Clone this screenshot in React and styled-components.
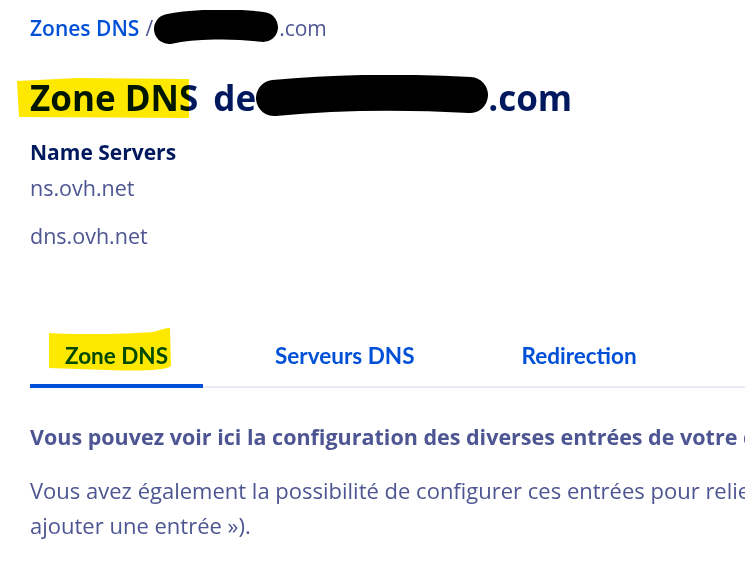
import React from "react";
import styled, { createGlobalStyle } from "styled-components";

const GlobalStyle = createGlobalStyle`
  body {
    margin: 0;
    background: #ffffff;
  }
`;

const Page = styled.div`
  width: 745px;
  height: 565px;
  overflow: hidden;
  box-sizing: border-box;
  padding: 10px 0 0 30px;
  font-family: "Open Sans", sans-serif;
`;

const Breadcrumb = styled.div`
  display: flex;
  align-items: center;
  height: 36px;
  font-size: 21px;
  color: #4d5592;
`;

const Crumb = styled.span`
  color: #0050d7;
  font-weight: 600;
`;

const Sep = styled.span`
  margin-left: 6px;
`;

const Title = styled.h1`
  position: relative;
  display: flex;
  align-items: center;
  margin: 29px 0 0;
  height: 44px;
  font-size: 35px;
  font-weight: 700;
  color: #00185e;
`;

const TitleWord = styled.span`
  white-space: pre;
  margin-left: ${(p) => p.$gap || 0}px;
`;

const Scribble = styled.svg`
  display: block;
  flex: none;
`;

const Marker = styled.svg`
  position: absolute;
  left: ${(p) => p.$left}px;
  top: ${(p) => p.$top}px;
  mix-blend-mode: multiply;
  pointer-events: none;
`;

const SectionTitle = styled.h2`
  margin: 19px 0 0;
  font-size: 21px;
  line-height: 28px;
  font-weight: 700;
  color: #00185e;
`;

const Server = styled.div`
  margin-top: ${(p) => p.$gap}px;
  font-size: 21.5px;
  line-height: 28px;
  color: #4d5592;
`;

const Tabs = styled.div`
  display: flex;
  gap: 37px;
  margin-top: 76px;
  border-bottom: 2px solid #e6ebf5;
`;

const Tab = styled.div`
  position: relative;
  padding: 14px 35px 12px;
  margin-bottom: -2px;
  font-family: Lato, sans-serif;
  font-size: 22.5px;
  line-height: 32px;
  font-weight: 700;
  color: #0050d7;
  border-bottom: 4px solid ${(p) => (p.$active ? "#0050d7" : "transparent")};
`;

const Intro = styled.p`
  margin: 34px 0 0;
  font-size: 21.5px;
  line-height: 30px;
  font-weight: 700;
  color: #4d5592;
  white-space: nowrap;
`;

const Body = styled.p`
  margin: 21px 0 0;
  font-size: 22px;
  line-height: 35px;
  color: #4d5592;
  white-space: pre;
`;

export default function App() {
  return (
    <Page>
      <GlobalStyle />
      <Breadcrumb>
        <Crumb>Zones DNS</Crumb>
        <Sep>/</Sep>
        <Scribble width="126" height="36" viewBox="0 0 126 36">
          <path
            d="M16 19 C40 14, 80 13, 110 17"
            stroke="#000"
            strokeWidth="30"
            strokeLinecap="round"
            fill="none"
          />
        </Scribble>
        <span>.com</span>
      </Breadcrumb>

      <Title>
        <TitleWord>Zone DNS</TitleWord>
        <TitleWord $gap={15}>de</TitleWord>
        <Scribble width="232" height="44" viewBox="0 0 232 44">
          <path
            d="M18 23 C70 18, 140 16, 214 20"
            stroke="#000"
            strokeWidth="36"
            strokeLinecap="round"
            fill="none"
          />
        </Scribble>
        <TitleWord>.com</TitleWord>
        <Marker $left={-13} $top={2} width="172" height="41" viewBox="0 0 172 41">
          <path d="M0 4 L60 1 L172 2 L172 41 L2 40 Z" fill="#ffe800" />
        </Marker>
      </Title>

      <SectionTitle>Name Servers</SectionTitle>
      <Server $gap={8}>ns.ovh.net</Server>
      <Server $gap={20}>dns.ovh.net</Server>

      <Tabs>
        <Tab $active>
          Zone DNS
          <Marker $left={17} $top={2} width="124" height="44" viewBox="0 0 124 44">
            <path
              d="M2 5 C30 7, 80 6, 106 4 C114 2, 118 0, 123 0 L124 38 C118 43, 90 43, 60 42 L2 40 Z"
              fill="#ffe800"
            />
          </Marker>
        </Tab>
        <Tab>Serveurs DNS</Tab>
        <Tab>Redirection</Tab>
      </Tabs>

      <Intro>Vous pouvez voir ici la configuration des diverses entrées de votre domaine.</Intro>
      <Body>
        {"Vous avez également la possibilité de configurer ces entrées pour relier votre domaine\najouter une entrée »)."}
      </Body>
    </Page>
  );
}
